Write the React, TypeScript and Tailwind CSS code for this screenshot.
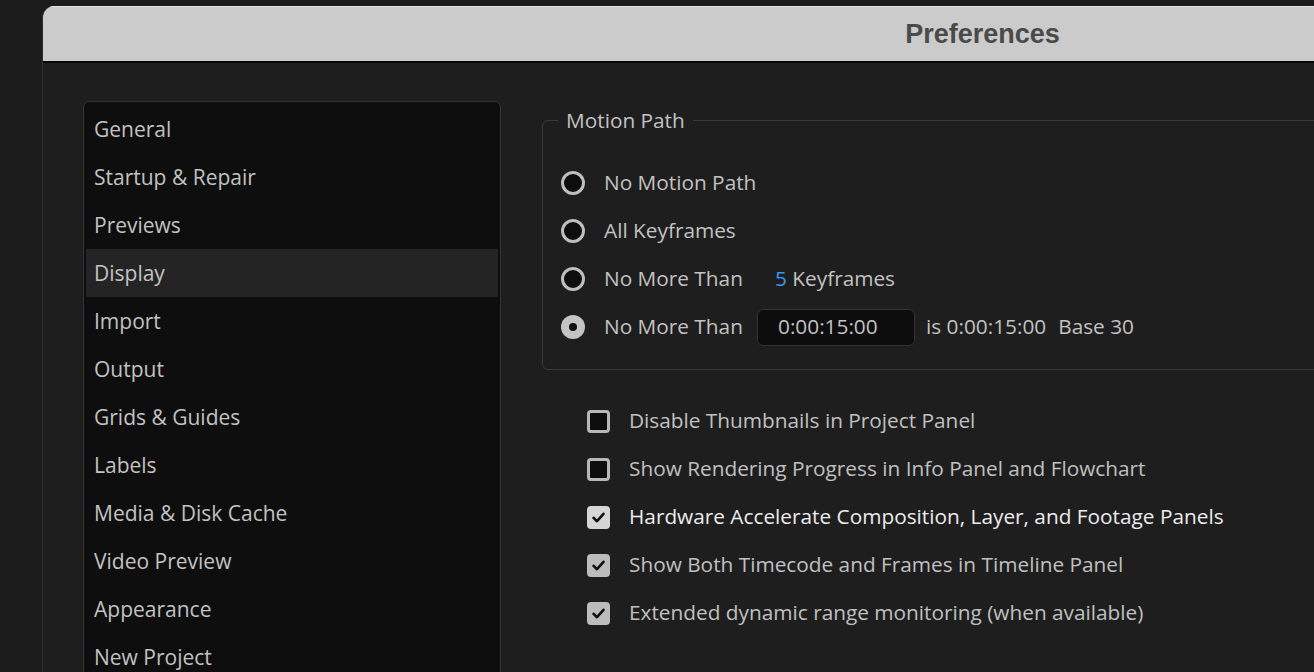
import React from 'react';

const sections = [
  'General',
  'Startup & Repair',
  'Previews',
  'Display',
  'Import',
  'Output',
  'Grids & Guides',
  'Labels',
  'Media & Disk Cache',
  'Video Preview',
  'Appearance',
  'New Project',
];

const options = [
  { label: 'Disable Thumbnails in Project Panel', checked: false },
  { label: 'Show Rendering Progress in Info Panel and Flowchart', checked: false },
  { label: 'Hardware Accelerate Composition, Layer, and Footage Panels', checked: true, focused: true },
  { label: 'Show Both Timecode and Frames in Timeline Panel', checked: true },
  { label: 'Extended dynamic range monitoring (when available)', checked: true },
];

function Radio({ selected }: { selected?: boolean }) {
  if (selected) {
    return (
      <span className="flex h-[24px] w-[24px] shrink-0 items-center justify-center rounded-full bg-[#c4c4c4]">
        <span className="h-[8px] w-[8px] rounded-full bg-[#111]" />
      </span>
    );
  }
  return <span className="h-[24px] w-[24px] shrink-0 rounded-full border-[3px] border-[#bebebe] bg-[#0e0e0e]" />;
}

function Checkbox({ checked, focused }: { checked: boolean; focused?: boolean }) {
  if (!checked) {
    return <span className="h-[23px] w-[23px] shrink-0 rounded-[4px] border-[3px] border-[#b8b8b8] bg-[#0e0e0e]" />;
  }
  return (
    <span
      className={`flex h-[23px] w-[23px] shrink-0 items-center justify-center rounded-[4px] ${
        focused ? 'bg-[#d6d6d6]' : 'bg-[#bcbcbc]'
      }`}
    >
      <svg width="15" height="15" viewBox="0 0 15 15" fill="none">
        <path d="M2.5 7.8 L6 11.2 L12.5 3.8" stroke="#111" strokeWidth="2.6" strokeLinecap="round" strokeLinejoin="round" />
      </svg>
    </span>
  );
}

export default function App() {
  return (
    <div className="h-[672px] w-[1314px] overflow-hidden bg-[#1b1b1b] pl-[42px] pt-[6px] font-['Open_Sans',sans-serif]">
      <div className="h-[700px] w-[1880px] overflow-hidden rounded-tl-[12px] border-l border-[#2e2e2e] bg-[#1e1e1e]">
        {/* Title bar */}
        <div className="flex h-[57px] items-center justify-center border-t border-[#e2e2e2] border-b-2 border-b-[#050505] bg-[#cbcbcb]">
          <span className="font-['Liberation_Sans',sans-serif] text-[27px] font-bold text-[#4a4a4a]">Preferences</span>
        </div>

        <div className="flex items-start pl-[40px] pt-[38px]">
          {/* Sidebar */}
          <div className="h-[600px] w-[418px] shrink-0 rounded-[6px] border border-[#353535] bg-[#0e0e0e] px-[2px] pt-[3px]">
            {sections.map((s) => (
              <div
                key={s}
                className={`flex h-[48px] items-center pl-[8px] pt-[1px] text-[21px] text-[#c2c2c2] ${
                  s === 'Display' ? 'bg-[#242424]' : ''
                }`}
              >
                {s}
              </div>
            ))}
          </div>

          {/* Content */}
          <div className="ml-[41px] flex-1">
            <fieldset className="mt-[5px] w-[900px] rounded-[6px] border border-[#3a3a3a] pb-[18px] pl-[18px]">
              <legend className="-ml-[3px] px-[8px] text-[20.8px] leading-[28px] text-[#c2c2c2]">Motion Path</legend>
              <div className="mt-[25px] flex flex-col text-[20.8px] text-[#c2c2c2]">
                <div className="flex h-[48px] items-center gap-[19px]">
                  <Radio />
                  <span>No Motion Path</span>
                </div>
                <div className="flex h-[48px] items-center gap-[19px]">
                  <Radio />
                  <span>All Keyframes</span>
                </div>
                <div className="flex h-[48px] items-center gap-[19px]">
                  <Radio />
                  <span className="w-[153px]">No More Than</span>
                  <span className="-ml-[19px] pl-[18px]">
                    <span className="text-[#3d96f0]">5</span> Keyframes
                  </span>
                </div>
                <div className="flex h-[48px] items-center gap-[19px]">
                  <Radio selected />
                  <span className="w-[153px]">No More Than</span>
                  <div className="-ml-[19px] flex h-[37px] w-[158px] items-center rounded-[6px] border border-[#333] bg-[#0d0d0d] pl-[20px]">
                    0:00:15:00
                  </div>
                  <span className="-ml-[8px]">is 0:00:15:00</span>
                  <span className="-ml-[7px]">Base 30</span>
                </div>
              </div>
            </fieldset>

            <div className="mt-[27px] flex flex-col pl-[45px] text-[20.8px]">
              {options.map((o) => (
                <div key={o.label} className="flex h-[48px] items-center gap-[19px]">
                  <Checkbox checked={o.checked} focused={o.focused} />
                  <span className={o.focused ? 'text-[#ececec]' : 'text-[#c0c0c0]'}>{o.label}</span>
                </div>
              ))}
            </div>
          </div>
        </div>
      </div>
    </div>
  );
}
